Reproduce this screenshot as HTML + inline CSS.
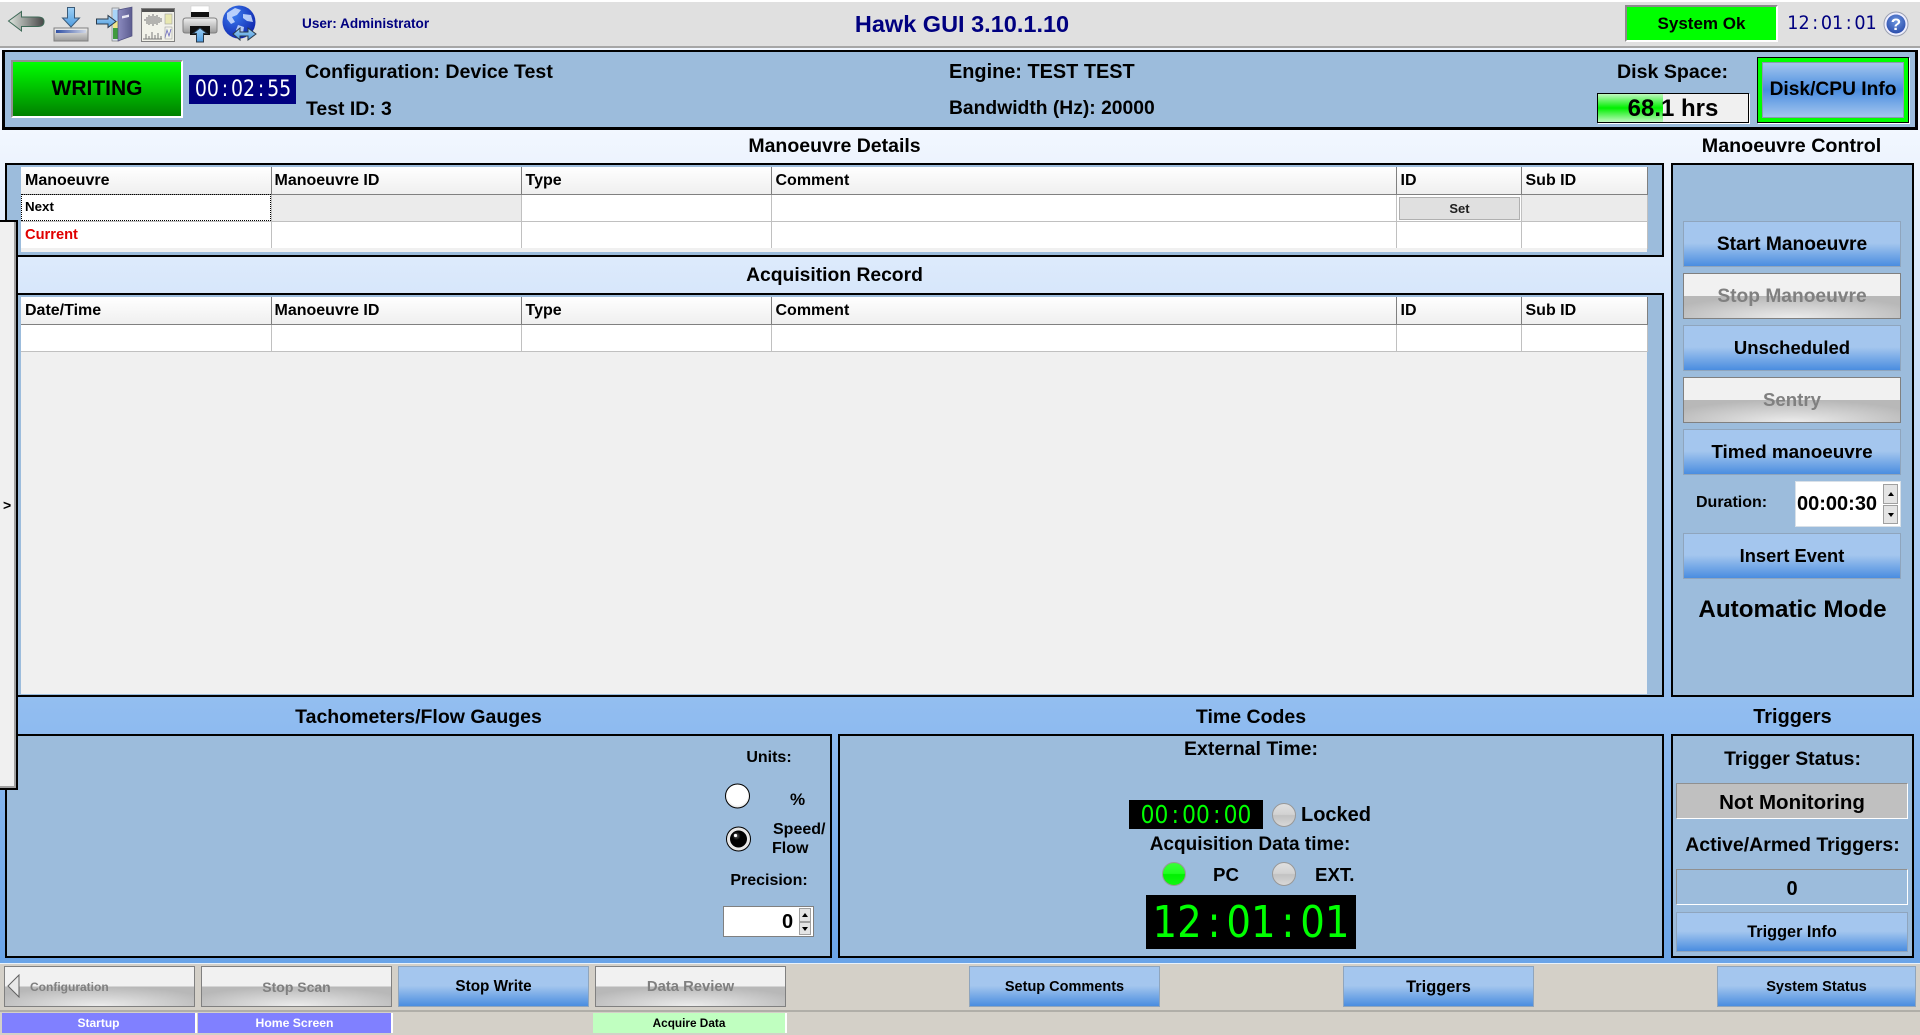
<!DOCTYPE html>
<html><head><meta charset="utf-8"><title>Hawk GUI</title>
<style>
*{box-sizing:border-box}
html,body{margin:0;padding:0;width:1920px;height:1035px;overflow:hidden}
body{position:relative;font-family:"Liberation Sans",Arial,sans-serif;background:#fff;color:#000}
div,span,svg,table{position:absolute}
td,th{position:static}
.t{height:30px;line-height:30px;white-space:nowrap;font-weight:bold;margin-top:1px}
.c{text-align:center}
.p{border:2px solid #000;background:#9cbcdc}
.b{border:1px solid #8fa5bd;background:linear-gradient(#a4c6ee 0,#a4c6ee 48%,#4a8de0 100%);text-align:center;font-weight:bold;white-space:nowrap}
.g{border:1px solid #808080;background:linear-gradient(#f1f1f1,#f1f1f1) top/100% 50% no-repeat,radial-gradient(ellipse 62% 50% at 50% 100%,#ececec 0,#b8b8b8 100%);text-align:center;font-weight:bold;color:#808080;white-space:nowrap}
table{border-collapse:collapse;table-layout:fixed;background:#fff}
th{height:27px;padding:2px 0 0 4px;text-align:left;font-size:16px;background:linear-gradient(#fff,#efefef);border-right:1px solid #808080;border-bottom:1px solid #808080;overflow:hidden}
th:nth-child(2){padding-left:3px}
td{height:27px;padding:0 0 0 4px;font-weight:bold;border-right:1px solid #c0c0c0;border-bottom:1px solid #c0c0c0;overflow:hidden}
.led{border-radius:50%;border:1px solid #989898;background:linear-gradient(#e0e0e0 0,#d2d2d2 48%,#c2c2c2 52%,#d8d8d8 100%)}
.mono{font-family:"DejaVu Sans",sans-serif;font-weight:normal;white-space:nowrap;overflow:hidden}
.mono b{position:absolute;left:50%;top:0;font-weight:normal;white-space:nowrap}
.mono i{display:inline-block;width:.636em;text-align:center;font-style:normal}
.spin{background:#e4e4e4;border:1px solid #a0a0a0}
.spin:after{content:"";position:absolute;left:50%;top:50%;margin:-2px 0 0 -3px;border-left:3px solid transparent;border-right:3px solid transparent}
.up:after{border-bottom:4px solid #000}
.dn:after{border-top:4px solid #000}
</style></head>
<body>
<!-- main gradient background -->
<div style="left:0;top:48px;width:1920px;height:916px;background:linear-gradient(#f2f7ff 0,#f2f7ff 9%,#90bcf0 73%,#6aa4e8 100%)"></div>

<!-- top bar -->
<div style="left:0;top:2px;width:1920px;height:46px;background:#e0e0e0;border-bottom:2px solid #a6a6a6"></div>

<!-- toolbar icons -->
<svg style="left:0;top:0" width="270" height="48" viewBox="0 0 270 48">
<defs>
<linearGradient id="ga" x1="0" x2="1" y1="0" y2="0"><stop offset="0" stop-color="#dfe6df"/><stop offset="1" stop-color="#474747"/></linearGradient>
<linearGradient id="gb" x1="0" x2="0" y1="0" y2="1"><stop offset="0" stop-color="#9ed0f5"/><stop offset="1" stop-color="#4d9be0"/></linearGradient>
<linearGradient id="gt" x1="0" x2="1" y1="0" y2="0"><stop offset="0" stop-color="#2f4fa5"/><stop offset="1" stop-color="#cfd6e6"/></linearGradient>
<linearGradient id="gf" x1="0" x2="0" y1="0" y2="1"><stop offset="0" stop-color="#f0f0f0"/><stop offset="1" stop-color="#9a9a9a"/></linearGradient>
<linearGradient id="gd" x1="0" x2="1" y1="0" y2="0"><stop offset="0" stop-color="#8c8cc0"/><stop offset="1" stop-color="#5c5c90"/></linearGradient>
<radialGradient id="gg" cx=".35" cy=".3" r=".8"><stop offset="0" stop-color="#3b7cf0"/><stop offset="1" stop-color="#0c1fa8"/></radialGradient>
</defs>
<!-- back -->
<path d="M8.5 21 L21.5 11.5 V17 H38 Q44 17 44 21.5 Q44 26.5 38 26.5 H21.5 V31 Z" fill="url(#ga)" stroke="#3f6a58" stroke-width="1"/>
<!-- download -->
<path d="M67.5 7.5 H74.5 V18 H79.5 L71 27 L62.5 18 H67.5 Z" fill="url(#gb)" stroke="#3a5a78" stroke-width="1"/>
<rect x="54" y="28" width="34" height="13" fill="url(#gf)" stroke="#808080"/>
<rect x="56" y="30" width="30" height="3" fill="url(#gt)"/>
<!-- door -->
<rect x="112" y="8" width="7" height="33" fill="#d8e2ee" stroke="#707070" stroke-width=".6"/>
<rect x="113" y="10" width="5" height="11" fill="#a8d4f8"/>
<rect x="113" y="21" width="5" height="7" fill="#f0e68a"/>
<rect x="113" y="28" width="5" height="11" fill="#3f9a3f"/>
<path d="M118 10 L132 7 V36 L118 41 Z" fill="url(#gd)" stroke="#505080" stroke-width=".7"/>
<path d="M122 16 L129 14.5 V17 L122 18.5 Z" fill="#e8e8f4"/>
<path d="M96.5 19 H108 V15.5 L116 21.5 L108 27.5 V24 H96.5 Z" fill="url(#gb)" stroke="#2a3a4a" stroke-width="1"/>
<!-- waveform window -->
<rect x="141.5" y="8.5" width="33" height="33" fill="#f2f2ea" stroke="#808080"/>
<rect x="142" y="9" width="32" height="3" fill="#505050"/>
<path d="M144 20 h2 M147 17 v7 M149 15 v10 M151 16 v8 M153 14 v12 M155 16 v8 M157 15 v10 M159 17 v6 M161 18 v4" stroke="#8a8a8a" stroke-width="1.2" fill="none"/>
<path d="M143 39 H162 M146 39 v-5 M149 39 v-3 M152 39 v-7 M155 39 v-4 M158 39 v-6 M161 39 v-3" stroke="#7a7a7a" stroke-width="1" fill="none"/>
<rect x="165" y="14" width="7" height="10" fill="#e8e8b0" stroke="#a0a0a0" stroke-width=".6"/>
<path d="M165 38 L167 30 L169 36 L171 29" stroke="#6a6ac0" stroke-width=".8" fill="none"/>
<rect x="165" y="27" width="7" height="12" fill="none" stroke="#a0a0a0" stroke-width=".6"/>
<!-- printer -->
<rect x="191" y="6" width="18" height="12" fill="#fff" stroke="#c8c8c8" stroke-width=".5"/>
<rect x="191" y="12" width="18" height="5" fill="#111"/>
<path d="M186 18 H214 Q217 18 217 21 V31 Q217 33 214 33 H186 Q183 33 183 31 V21 Q183 18 186 18 Z" fill="url(#gf)" stroke="#808080"/>
<rect x="190" y="26" width="20" height="9" fill="#111"/>
<path d="M200 28 L207 33.5 H203.5 V42 H196.5 V33.5 H193 Z" fill="url(#gb)" stroke="#2a3a4a" stroke-width="1"/>
<!-- globe -->
<circle cx="239" cy="22" r="16.5" fill="url(#gg)"/>
<path d="M227 13 L235 8 L241 10 L237 15 L232 17 L235 22 L231 24 L227 19 Z M243 14 L251 15 L253 22 L247 21 L243 18 Z M238 25 L244 27 L243 33 L239 36 L236 30 Z" fill="#cfe0ff" opacity=".85"/>
<path d="M233 34 L240 28 V32 H248 V28 L256 34 L248 40 V36 H240 V40 Z" fill="url(#gb)" stroke="#2a3a4a" stroke-width="1"/>
</svg>

<div class="t" style="left:302px;top:8px;font-size:13.6px;color:#000080">User: Administrator</div>
<div class="t c" style="left:762px;top:8px;width:400px;font-size:23.5px;color:#000080">Hawk GUI 3.10.1.10</div>
<div style="left:1625px;top:5px;width:153px;height:37px;background:#00ff00;border:2px solid;border-color:#8a8a8a #fff #fff #8a8a8a"></div>
<div class="t c" style="left:1625px;top:8px;width:153px;font-size:17px">System Ok</div>
<div class="mono" style="left:1785px;top:10px;width:95px;height:28px;line-height:28px;font-size:18.5px;color:#000080"><b style="transform:translateX(-50%) scaleX(.95);margin-left:-1px">12<i>:</i>01<i>:</i>01</b></div>
<svg style="left:1883px;top:11px" width="26" height="26" viewBox="0 0 26 26">
<defs><radialGradient id="gq" cx=".5" cy=".35" r=".7"><stop offset="0" stop-color="#6d96e0"/><stop offset="1" stop-color="#2648a8"/></radialGradient></defs>
<circle cx="13" cy="13" r="12" fill="#eef" stroke="#9aa0b0"/><circle cx="13" cy="13" r="9.5" fill="url(#gq)"/>
<text x="13" y="19" text-anchor="middle" font-family="Liberation Sans" font-weight="bold" font-size="17" fill="#fff">?</text></svg>

<!-- header panel -->
<div class="p" style="left:2px;top:50px;width:1916px;height:80px;border-width:2px 3px 3px 3px"></div>
<div style="left:11px;top:60px;width:172px;height:58px;border:2px solid;border-color:#909090 #fff #fff #909090;background:linear-gradient(#00ff00,#008000)"></div>
<div class="t c" style="left:11px;top:73px;width:172px;font-size:21px">WRITING</div>
<div class="mono" style="left:189px;top:75px;width:107px;height:29px;line-height:29px;background:#000080;color:#fff;font-size:22px"><b style="transform:translateX(-50%) scaleX(.86)">00<i>:</i>02<i>:</i>55</b></div>
<div class="t" style="left:305px;top:56px;font-size:19.6px">Configuration: Device Test</div>
<div class="t" style="left:306px;top:93px;font-size:19.4px">Test ID: 3</div>
<div class="t" style="left:949px;top:56px;font-size:19.9px">Engine: TEST TEST</div>
<div class="t" style="left:949px;top:93px;font-size:19.3px">Bandwidth (Hz): 20000</div>
<div class="t" style="left:1617px;top:56px;font-size:19.6px">Disk Space:</div>
<div style="left:1597px;top:93px;width:152px;height:30px;background:#f0f0f0;border:1px solid #000;box-shadow:1px 1px 0 #fff"></div>
<div style="left:1598px;top:94px;width:65px;height:28px;background:linear-gradient(#c0f8c0 0,#00f000 50%,#c0f8c0 100%)"></div>
<div class="t c" style="left:1597px;top:93px;width:152px;font-size:24px">68.1 hrs</div>
<div style="left:1757px;top:57px;width:152px;height:66px;background:#00ff00;border:1px solid #000;box-shadow:1px 1px 0 #fff"></div>
<div class="c" style="left:1762px;top:62px;width:142px;height:56px;line-height:54px;font-size:19.2px;font-weight:bold;white-space:nowrap;border:1px solid #8a9ab0;background:linear-gradient(#a4c6ee 0,#4a8de0 50%,#a4c6ee 100%)">Disk/CPU Info</div>

<!-- section labels -->
<div class="t c" style="left:5px;top:130px;width:1659px;font-size:19.5px">Manoeuvre Details</div>
<div class="t c" style="left:1670px;top:130px;width:243px;font-size:19.7px">Manoeuvre Control</div>

<!-- manoeuvre details panel -->
<div class="p" style="left:5px;top:163px;width:1659px;height:94px"></div>
<table style="left:21px;top:167px;width:1626px;background:#fff">
<colgroup><col style="width:250px"><col style="width:250px"><col style="width:250px"><col style="width:625px"><col style="width:125px"><col style="width:126px"></colgroup>
<tr><th>Manoeuvre</th><th>Manoeuvre ID</th><th>Type</th><th>Comment</th><th>ID</th><th>Sub ID</th></tr>
<tr><td style="font-size:13.33px;padding-bottom:2px;outline:1px dotted #000;outline-offset:-1px">Next</td><td style="background:#ebebeb"></td><td></td><td></td><td></td><td style="background:#ebebeb"></td></tr>
<tr><td style="font-size:14.67px;color:#e00000">Current</td><td></td><td></td><td></td><td></td><td></td></tr>
</table>
<div style="left:21px;top:248px;width:1626px;height:4px;background:#f0f0f0"></div>
<div class="c" style="left:1399px;top:197px;width:121px;height:23px;line-height:22px;background:#e0e0e0;border:1px solid #b0b0b0;font-size:13px;font-weight:bold;color:#202020">Set</div>

<!-- band behind Acquisition Record -->
<div class="t c" style="left:5px;top:260px;width:1659px;font-size:19.3px">Acquisition Record</div>
<div class="p" style="left:5px;top:293px;width:1659px;height:404px"></div>
<div style="left:21px;top:297px;width:1626px;height:397px;background:#f0f0f0"></div>
<table style="left:21px;top:297px;width:1626px;background:#fff">
<colgroup><col style="width:250px"><col style="width:250px"><col style="width:250px"><col style="width:625px"><col style="width:125px"><col style="width:126px"></colgroup>
<tr><th>Date/Time</th><th>Manoeuvre ID</th><th>Type</th><th>Comment</th><th>ID</th><th>Sub ID</th></tr>
<tr><td style="height:27px"></td><td></td><td></td><td></td><td></td><td></td></tr>
</table>

<!-- manoeuvre control -->
<div class="p" style="left:1671px;top:163px;width:243px;height:534px"></div>
<div class="b" style="left:1683px;top:221px;width:218px;height:46px;line-height:45px;font-size:19.2px">Start Manoeuvre</div>
<div class="g" style="left:1683px;top:273px;width:218px;height:46px;line-height:45px;font-size:19.2px">Stop Manoeuvre</div>
<div class="b" style="left:1683px;top:325px;width:218px;height:46px;line-height:44px;font-size:18.5px">Unscheduled</div>
<div class="g" style="left:1683px;top:377px;width:218px;height:46px;line-height:44px;font-size:18.67px">Sentry</div>
<div class="b" style="left:1683px;top:429px;width:218px;height:46px;line-height:45px;font-size:18.9px">Timed manoeuvre</div>
<div class="t" style="left:1696px;top:487px;font-size:16px">Duration:</div>
<div style="left:1795px;top:481px;width:106px;height:46px;background:#fff;border:1px solid #d8e0e8"></div>
<div class="t" style="left:1797px;top:488px;font-size:20px">00:00:30</div>
<div class="spin up" style="left:1883px;top:484px;width:15px;height:20px"></div>
<div class="spin dn" style="left:1883px;top:505px;width:15px;height:19px"></div>
<div class="b" style="left:1683px;top:533px;width:218px;height:46px;line-height:44px;font-size:18.3px">Insert Event</div>
<div class="t c" style="left:1671px;top:594px;width:243px;font-size:24.2px">Automatic Mode</div>

<!-- bottom section labels -->
<div class="t c" style="left:5px;top:701px;width:827px;font-size:19.5px">Tachometers/Flow Gauges</div>
<div class="t c" style="left:838px;top:701px;width:826px;font-size:19.5px">Time Codes</div>
<div class="t c" style="left:1671px;top:701px;width:243px;font-size:19.9px">Triggers</div>

<!-- tach panel -->
<div class="p" style="left:5px;top:734px;width:827px;height:224px"></div>
<div class="t c" style="left:709px;top:742px;width:120px;font-size:16px">Units:</div>
<svg style="left:720px;top:778px" width="40" height="80" viewBox="0 0 40 80">
<defs><radialGradient id="gw" cx=".5" cy=".45" r=".6"><stop offset="0" stop-color="#fff"/><stop offset=".7" stop-color="#fff"/><stop offset="1" stop-color="#d4d4d4"/></radialGradient>
<radialGradient id="gk" cx=".38" cy=".32" r=".7"><stop offset="0" stop-color="#666"/><stop offset=".35" stop-color="#000"/></radialGradient></defs>
<circle cx="17.5" cy="18" r="12" fill="url(#gw)" stroke="#000" stroke-width="1"/>
<circle cx="18.5" cy="61" r="12" fill="#e8e8e8" stroke="#000" stroke-width="1"/>
<circle cx="18.5" cy="61" r="8.5" fill="url(#gk)"/>
<circle cx="15.5" cy="57.5" r="1.6" fill="#fff"/>
</svg>
<div class="t" style="left:790px;top:784px;font-size:17px">%</div>
<div class="t" style="left:773px;top:814px;font-size:16px">Speed/</div>
<div class="t" style="left:772px;top:833px;font-size:16px">Flow</div>
<div class="t c" style="left:709px;top:865px;width:120px;font-size:16px">Precision:</div>
<div style="left:723px;top:906px;width:91px;height:31px;background:#fff;border:1px solid #808080"></div>
<div class="t" style="left:782px;top:906px;font-size:20px">0</div>
<div class="spin up" style="left:799px;top:908px;width:12px;height:14px"></div>
<div class="spin dn" style="left:799px;top:922px;width:12px;height:13px"></div>

<!-- time panel -->
<div class="p" style="left:838px;top:734px;width:826px;height:224px"></div>
<div class="t c" style="left:838px;top:733px;width:826px;font-size:19.5px">External Time:</div>
<div class="mono" style="left:1129px;top:800px;width:134px;height:29px;line-height:29px;background:#000;color:#00ff00;font-size:25px"><b style="transform:translateX(-50%) scaleX(.87)">00<i>:</i>00<i>:</i>00</b></div>
<div class="led" style="left:1272px;top:803px;width:24px;height:24px"></div>
<div class="t" style="left:1301px;top:799px;font-size:20px">Locked</div>
<div class="t c" style="left:1100px;top:829px;width:300px;font-size:19px">Acquisition Data time:</div>
<div class="led" style="left:1162px;top:862px;width:24px;height:24px;background:linear-gradient(#38ff38 0,#20ff20 48%,#00f000 52%,#10f810 100%)"></div>
<div class="t" style="left:1213px;top:859px;font-size:18.67px">PC</div>
<div class="led" style="left:1272px;top:862px;width:24px;height:24px"></div>
<div class="t" style="left:1315px;top:859px;font-size:18.67px">EXT.</div>
<div class="mono" style="left:1146px;top:895px;width:210px;height:54px;line-height:56px;background:#000;color:#00ff00;font-size:44px"><b style="transform:translateX(-50%) scaleX(.88)">12<i>:</i>01<i>:</i>01</b></div>

<!-- triggers panel -->
<div class="p" style="left:1671px;top:734px;width:243px;height:224px"></div>
<div class="t c" style="left:1671px;top:743px;width:243px;font-size:19.4px">Trigger Status:</div>
<div class="c" style="left:1676px;top:783px;width:232px;height:36px;line-height:37px;background:#c0c0c0;border:1px solid;border-color:#909090 #fff #fff #909090;font-size:20.5px;font-weight:bold">Not Monitoring</div>
<div class="t c" style="left:1671px;top:829px;width:243px;font-size:19.5px">Active/Armed Triggers:</div>
<div class="c" style="left:1676px;top:869px;width:232px;height:36px;line-height:38px;border:1px solid;border-color:#909090 #fff #fff #909090;font-size:20px;font-weight:bold">0</div>
<div class="b" style="left:1676px;top:912px;width:232px;height:40px;line-height:39px;font-size:16.3px">Trigger Info</div>

<!-- bottom strip -->
<div style="left:0;top:963px;width:1920px;height:72px;background:#d4d0c8;border-top:1px solid #e8f2fc"></div>
<div style="left:0;top:1010px;width:1920px;height:2px;background:#b0aea8"></div>
<div class="g" style="left:4px;top:966px;width:191px;height:41px;line-height:40px;font-size:12px"><span style="left:25px;top:0;white-space:nowrap">Configuration</span></div>
<svg style="left:7px;top:974px" width="14" height="24" viewBox="0 0 14 24"><path d="M12 1 L1 12 L12 23 Z" fill="#e8e8e8" stroke="#606060"/></svg>
<div class="g" style="left:201px;top:966px;width:191px;height:41px;line-height:40px;font-size:14px">Stop Scan</div>
<div class="b" style="left:398px;top:966px;width:191px;height:41px;line-height:40px;font-size:15.3px">Stop Write</div>
<div class="g" style="left:595px;top:966px;width:191px;height:41px;line-height:40px;font-size:14.8px">Data Review</div>
<div class="b" style="left:969px;top:966px;width:191px;height:41px;line-height:40px;font-size:14.5px">Setup Comments</div>
<div class="b" style="left:1343px;top:966px;width:191px;height:41px;line-height:40px;font-size:16.4px">Triggers</div>
<div class="b" style="left:1717px;top:966px;width:199px;height:41px;line-height:40px;font-size:14.6px">System Status</div>
<div class="c" style="left:2px;top:1013px;width:193px;height:20px;line-height:20px;background:#8080ff;color:#fff;font-size:12px;font-weight:bold;box-shadow:2px 0 0 #fff">Startup</div>
<div class="c" style="left:198px;top:1013px;width:193px;height:20px;line-height:20px;background:#8080ff;color:#fff;font-size:12.2px;font-weight:bold;box-shadow:2px 0 0 #fff">Home Screen</div>
<div class="c" style="left:593px;top:1013px;width:192px;height:20px;line-height:20px;background:#c0ffc0;color:#000;font-size:11.8px;font-weight:bold;box-shadow:2px 0 0 #fff">Acquire Data</div>

<!-- left flyout -->
<div style="left:0;top:220px;width:18px;height:570px;background:#f0f0f0;border:2px solid #000;border-left:0"></div>
<div style="left:0;top:222px;width:16px;height:566px;border-right:2px solid #a0a0a0;border-bottom:2px solid #a0a0a0"></div>
<div class="t" style="left:3px;top:489px;font-size:14px">&gt;</div>
</body></html>
